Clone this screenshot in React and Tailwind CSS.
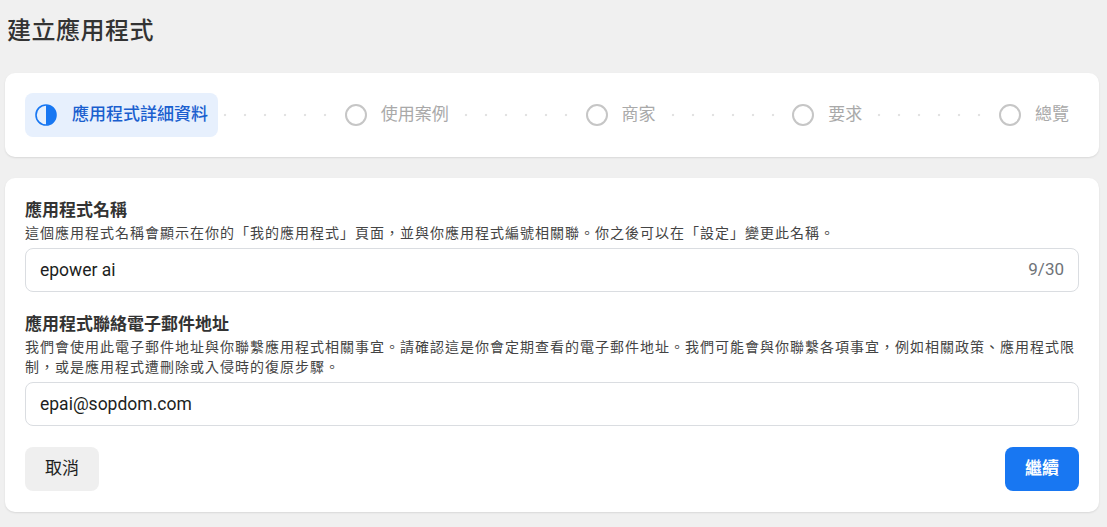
import { Fragment } from "react";

const pasos = [
  { label: "應用程式詳細資料", activo: true },
  { label: "使用案例" },
  { label: "商家" },
  { label: "要求" },
  { label: "總覽" },
];

function IconoPaso({ activo }) {
  if (activo) {
    return (
      <svg width="22" height="22" viewBox="0 0 22 22" className="shrink-0">
        <circle cx="11" cy="11" r="10" fill="none" stroke="#1877f2" strokeWidth="1.6" />
        <path d="M11 1 A10 10 0 0 1 11 21 Z" fill="#1877f2" />
      </svg>
    );
  }
  return <span className="w-[22px] h-[22px] shrink-0 rounded-full border-2 border-[#c6c6c6]" />;
}

function Paso({ label, activo }) {
  return (
    <div
      className={
        activo
          ? "flex items-center gap-[15px] h-11 px-[10px] rounded-lg bg-[#e7f0fd]"
          : "flex items-center gap-[14px] h-11 px-[10px]"
      }
    >
      <IconoPaso activo={activo} />
      <span
        className={
          activo ? "text-[17px] text-[#1a5fcf] font-medium" : "text-[17px] text-[#a9a9a9]"
        }
      >
        {label}
      </span>
    </div>
  );
}

function Puntos() {
  return (
    <div className="flex-1 h-2 bg-[radial-gradient(circle,#e2e2e2_1.1px,transparent_1.6px)] bg-[length:20px_8px] bg-repeat-x bg-[position:-3px_0]" />
  );
}

function Campo({ label, descripcion, valor, contador, className }) {
  return (
    <div className={className}>
      <div className="text-[17px] leading-5 font-semibold text-[#333333]">{label}</div>
      <p className="mt-[3px] text-[14px] tracking-[1px] leading-5 text-[#444444]">{descripcion}</p>
      <div className="mt-[5px] h-11 flex items-center justify-between px-[14px] border border-[#dadde1] rounded-lg">
        <span className="text-[17.5px] text-[#1c1e21]">{valor}</span>
        {contador && <span className="text-[17px] text-[#6f7378]">{contador}</span>}
      </div>
    </div>
  );
}

export default function App() {
  return (
    <div className="min-h-screen bg-[#f0f0f0] pl-[5px] pr-[8px] font-['Roboto','Noto_Sans_CJK_TC',sans-serif]">
      <h1 className="pt-[15px] pl-[2px] text-[24px] leading-8 tracking-[0.5px] font-medium text-[#333]">
        建立應用程式
      </h1>

      <div className="mt-[26px] bg-white rounded-[10px] shadow-[0_1px_2px_rgba(0,0,0,0.1)] px-5 py-5">
        <div className="flex items-center">
          {pasos.map((p, i) => (
            <Fragment key={p.label}>
              {i > 0 && <Puntos />}
              <Paso label={p.label} activo={p.activo} />
            </Fragment>
          ))}
        </div>
      </div>

      <div className="mt-[21px] bg-white rounded-[10px] shadow-[0_1px_2px_rgba(0,0,0,0.1)] px-5 pt-[22px] pb-[21px]">
        <Campo
          label="應用程式名稱"
          descripcion="這個應用程式名稱會顯示在你的「我的應用程式」頁面，並與你應用程式編號相關聯。你之後可以在「設定」變更此名稱。"
          valor="epower ai"
          contador="9/30"
        />
        <Campo
          className="mt-[22px]"
          label="應用程式聯絡電子郵件地址"
          descripcion="我們會使用此電子郵件地址與你聯繫應用程式相關事宜。請確認這是你會定期查看的電子郵件地址。我們可能會與你聯繫各項事宜，例如相關政策、應用程式限制，或是應用程式遭刪除或入侵時的復原步驟。"
          valor="epai@sopdom.com"
        />
        <div className="mt-[21px] flex justify-between">
          <button className="h-11 px-5 rounded-lg bg-[#efefef] text-[17px] text-[#1c1e21]">取消</button>
          <button className="h-11 px-5 rounded-lg bg-[#1877f2] text-[17px] font-bold text-white">繼續</button>
        </div>
      </div>
    </div>
  );
}
